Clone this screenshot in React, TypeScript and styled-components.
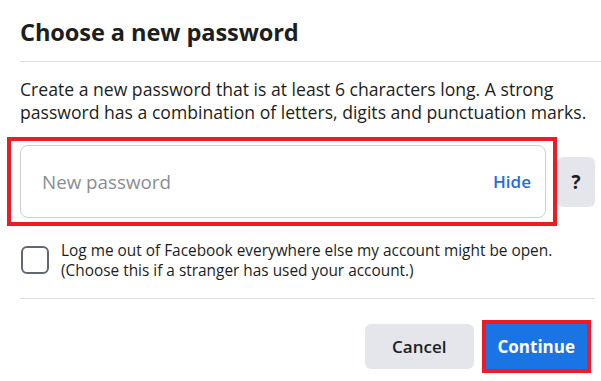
import React, { useState } from 'react';
import styled, { createGlobalStyle } from 'styled-components';

const GlobalStyle = createGlobalStyle`
  html, body {
    margin: 0;
    padding: 0;
    background: #ffffff;
    overflow: hidden;
  }
  body {
    font-family: 'Open Sans', 'Liberation Sans', sans-serif;
    color: #1c1e21;
  }
`;

const Dialog = styled.div`
  width: 601px;
  height: 381px;
  display: flex;
  flex-direction: column;
`;

const Header = styled.div`
  height: 62px;
  margin-left: 20px;
  padding-top: 2px;
  box-sizing: border-box;
  display: flex;
  align-items: center;
  border-bottom: 1px solid #dadde1;
`;

const Title = styled.h2`
  margin: 0;
  font-size: 23.6px;
  font-weight: 700;
  color: #1c1e21;
  letter-spacing: -0.1px;
`;

const Body = styled.div`
  padding: 16px 6px 0 0;
`;

const Description = styled.p`
  margin: 0 0 0 20px;
  font-size: 17.6px;
  line-height: 23px;
  color: #1c1e21;

  span {
    display: block;
    white-space: nowrap;
  }
`;

const FieldRow = styled.div`
  display: flex;
  align-items: center;
  margin: 13px 0 0 7px;
`;

const Highlight = styled.div<{ $pad?: string }>`
  border: 4px solid #ed1c24;
  padding: ${(p) => p.$pad || '0'};
  display: flex;
`;

const InputBox = styled.label`
  width: 526px;
  height: 73px;
  box-sizing: border-box;
  border: 1px solid #ccd0d5;
  border-radius: 8px;
  display: flex;
  align-items: center;
  padding: 0 14px 0 21px;
`;

const Input = styled.input`
  flex: 1;
  border: none;
  outline: none;
  background: transparent;
  font-family: inherit;
  font-size: 18.8px;
  color: #1c1e21;
  padding: 0;

  &::placeholder {
    color: #8a8d91;
  }
`;

const Toggle = styled.button`
  border: none;
  background: none;
  padding: 0;
  font-family: inherit;
  font-size: 17px;
  font-weight: 600;
  color: #216fdb;
  cursor: pointer;
`;

const HelpButton = styled.button`
  width: 39px;
  height: 50px;
  border: none;
  border-radius: 6px;
  background: #e4e6eb;
  font-family: inherit;
  font-size: 19px;
  font-weight: 700;
  color: #1c1e21;
  padding: 0;
  cursor: pointer;
`;

const CheckRow = styled.label`
  display: flex;
  align-items: flex-start;
  gap: 12px;
  margin: 14px 0 0 21px;
  cursor: pointer;
`;

const CheckBox = styled.span<{ $checked: boolean }>`
  flex: none;
  width: 28px;
  height: 28px;
  box-sizing: border-box;
  margin-top: 6px;
  border: 2px solid ${(p) => (p.$checked ? '#1b74e4' : '#606770')};
  border-radius: 6px;
  background: ${(p) => (p.$checked ? '#1b74e4' : '#ffffff')};
`;

const CheckText = styled.span`
  font-size: 15.4px;
  line-height: 20px;
  padding-top: 1px;
  color: #1c1e21;

  span {
    display: block;
    white-space: nowrap;
  }
`;

const Divider = styled.div`
  margin: 17px 0 0 20px;
  border-top: 1px solid #dadde1;
`;

const Footer = styled.div`
  display: flex;
  justify-content: flex-end;
  align-items: center;
  gap: 8px;
  padding: 21px 4px 0 0;
`;

const Button = styled.button<{ $primary?: boolean }>`
  height: 45px;
  border: none;
  border-radius: ${(p) => (p.$primary ? '0' : '6px')};
  padding: 0 ${(p) => (p.$primary ? '12px' : '27px')};
  background: ${(p) => (p.$primary ? '#1b74e4' : '#e4e6eb')};
  color: ${(p) => (p.$primary ? '#ffffff' : '#1c1e21')};
  font-family: inherit;
  font-size: 17px;
  font-weight: ${(p) => (p.$primary ? 700 : 600)};
  cursor: pointer;
`;

export default function App() {
  const [shown, setShown] = useState(true);
  const [logout, setLogout] = useState(false);

  return (
    <>
      <GlobalStyle />
      <Dialog>
        <Header>
          <Title>Choose a new password</Title>
        </Header>
        <Body>
          <Description>
            <span>Create a new password that is at least 6 characters long. A strong</span>
            <span>password has a combination of letters, digits and punctuation marks.</span>
          </Description>
          <FieldRow>
            <Highlight $pad="4px 7px 4px 9px">
              <InputBox>
                <Input type={shown ? 'text' : 'password'} placeholder="New password" />
                <Toggle type="button" onClick={() => setShown(!shown)}>
                  {shown ? 'Hide' : 'Show'}
                </Toggle>
              </InputBox>
            </Highlight>
            <HelpButton type="button">?</HelpButton>
          </FieldRow>
          <CheckRow onClick={() => setLogout(!logout)}>
            <CheckBox $checked={logout} />
            <CheckText>
              <span>Log me out of Facebook everywhere else my account might be open.</span>
              <span>(Choose this if a stranger has used your account.)</span>
            </CheckText>
          </CheckRow>
          <Divider />
          <Footer>
            <Button type="button">Cancel</Button>
            <Highlight>
              <Button type="button" $primary>
                Continue
              </Button>
            </Highlight>
          </Footer>
        </Body>
      </Dialog>
    </>
  );
}
